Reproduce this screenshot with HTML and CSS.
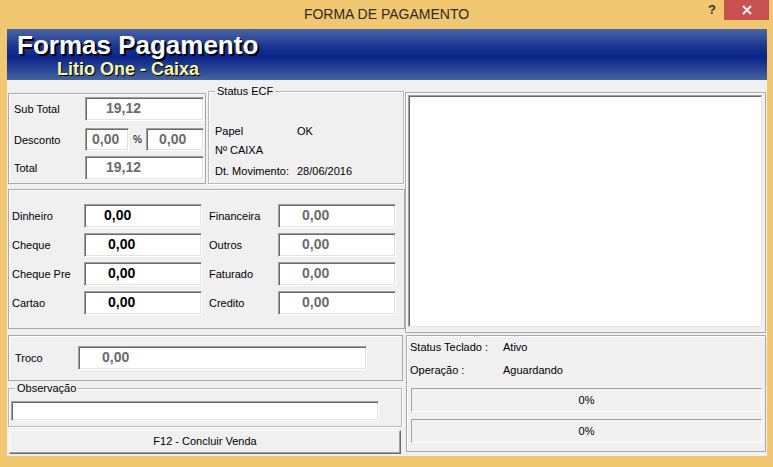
FILE: index.html
```html
<!DOCTYPE html>
<html lang="pt">
<head>
<meta charset="utf-8">
<title>Forma de Pagamento</title>
<link rel="stylesheet" href="styles.css">
</head>
<body>
<div class="window">
  <div class="titlebar">
    <div class="title">FORMA DE PAGAMENTO</div>
    <div class="help">?</div>
    <div class="close"><svg width="12" height="12" viewBox="0 0 12 12"><path d="M2 2 L10 10 M10 2 L2 10" stroke="#fff" stroke-width="1.8"/></svg></div>
  </div>
  <div class="client">
    <div class="header">
      <div class="h-title">Formas Pagamento</div>
      <div class="h-sub">Litio One - Caixa</div>
    </div>
    <div class="content">
      <div class="leftcol">
        <div class="toprow">
          <div class="panel totals">
            <div class="trow r1"><span class="lbl">Sub Total</span><div class="field w119 gray pl21">19,12</div></div>
            <div class="trow r2"><span class="lbl">Desconto</span><div class="field w44 gray pl7">0,00</div><span class="pct">%</span><div class="field w58 gray pl13">0,00</div></div>
            <div class="trow r3"><span class="lbl">Total</span><div class="field w119 gray pl21">19,12</div></div>
          </div>
          <div class="group ecf">
            <div class="legend">Status ECF</div>
            <div class="ecfrow e1"><span class="elbl">Papel</span><span>OK</span></div>
            <div class="ecfrow e2"><span class="elbl">Nº CAIXA</span><span></span></div>
            <div class="ecfrow e3"><span class="elbl">Dt. Movimento:</span><span>28/06/2016</span></div>
          </div>
        </div>
        <div class="panel payments">
          <div class="pcol">
            <div class="prow"><span class="plbl">Dinheiro</span><div class="field w118 black pl20">0,00</div></div>
            <div class="prow"><span class="plbl">Cheque</span><div class="field w118 black pl24">0,00</div></div>
            <div class="prow"><span class="plbl">Cheque Pre</span><div class="field w118 black pl24">0,00</div></div>
            <div class="prow"><span class="plbl">Cartao</span><div class="field w118 black pl24">0,00</div></div>
          </div>
          <div class="pcol pcol2">
            <div class="prow"><span class="plbl2">Financeira</span><div class="field w118 gray pl24">0,00</div></div>
            <div class="prow"><span class="plbl2">Outros</span><div class="field w118 gray pl24">0,00</div></div>
            <div class="prow"><span class="plbl2">Faturado</span><div class="field w118 gray pl24">0,00</div></div>
            <div class="prow"><span class="plbl2">Credito</span><div class="field w118 gray pl24">0,00</div></div>
          </div>
        </div>
        <div class="panel troco">
          <span class="tlbl">Troco</span><div class="field w289 gray pl24">0,00</div>
        </div>
        <div class="group obs">
          <div class="legend">Observação</div>
          <div class="field obsfield"></div>
        </div>
        <div class="button">F12 - Concluir Venda</div>
      </div>
      <div class="rightcol">
        <div class="memoframe"><div class="memo"></div></div>
        <div class="panel status">
          <div class="srow s1"><span class="slbl">Status Teclado :</span><span>Ativo</span></div>
          <div class="srow s2"><span class="slbl">Operação :</span><span>Aguardando</span></div>
          <div class="progress p1">0%</div>
          <div class="progress p2">0%</div>
        </div>
      </div>
    </div>
  </div>
</div>
</body>
</html>
```
FILE: styles.css
```css
* { box-sizing: border-box; }
html, body { margin: 0; padding: 0; }
body {
  width: 773px;
  height: 467px;
  overflow: hidden;
  font-family: "Liberation Sans", Arial, sans-serif;
  font-size: 11px;
  color: #000;
}
.window {
  width: 773px;
  height: 467px;
  background: #f1c76f;
  display: flex;
  flex-direction: column;
}
.titlebar {
  height: 29px;
  display: flex;
  align-items: flex-start;
  position: relative;
}
.title {
  position: absolute;
  left: 0;
  right: 0;
  top: 6px;
  text-align: center;
  font-family: "Liberation Sans", Arial, sans-serif;
  font-size: 14px;
  color: #2b2b2b;
}
.help {
  position: absolute;
  left: 708px;
  top: 2px;
  font-size: 13px;
  font-weight: bold;
  color: #333;
}
.close {
  position: absolute;
  left: 724px;
  top: 0;
  width: 45px;
  height: 20px;
  background: #c75050;
  display: flex;
  align-items: center;
  justify-content: center;
}
.client {
  margin: 0 6px 0 7px;
  height: 427px;
  background: #f0f0f0;
  display: flex;
  flex-direction: column;
}
.header {
  height: 51px;
  background: linear-gradient(#4a64a6 0%, #1a3592 35%, #0a2389 55%, #2a4795 80%, #4563a2 100%);
  padding-left: 10px;
}
.h-title {
  font-family: "Liberation Sans", Arial, sans-serif;
  font-weight: bold;
  font-size: 26px;
  color: #fff;
  line-height: 28px;
  padding-top: 2px;
  text-shadow: 2px 2px 0 #000;
}
.h-sub {
  font-family: "Liberation Sans", Arial, sans-serif;
  font-weight: bold;
  font-size: 18px;
  color: #fbf7a0;
  line-height: 18px;
  margin-left: 40px;
  margin-top: 1px;
  text-shadow: 1px 1px 0 #000;
}
.content {
  display: flex;
  flex: 1;
  padding-left: 1px;
}
.leftcol {
  width: 397px;
  display: flex;
  flex-direction: column;
}
.rightcol {
  width: 361px;
  display: flex;
  flex-direction: column;
}
.panel {
  border: 1px solid #a9a9a9;
  box-shadow: inset 1px 1px 0 #fff;
}
.group {
  border: 1px solid #b8b8b8;
  box-shadow: inset 1px 1px 0 #fff, 1px 1px 0 #fff;
  position: relative;
}
.legend {
  position: absolute;
  top: -7px;
  left: 6px;
  background: #f0f0f0;
  padding: 0 2px;
  line-height: 13px;
}
.toprow {
  display: flex;
  margin-top: 11px;
  height: 93px;
}
.totals {
  margin-top: 2px;
  width: 198px;
  height: 91px;
  padding: 3px 0 0 5px;
}
.trow {
  display: flex;
  align-items: center;
  height: 24px;
}
.r2 { margin-top: 7px; height: 23px; }
.r3 { margin-top: 5px; }
.lbl { width: 71px; }
.pct { width: 17px; text-align: center; font-size: 10px; }
.field {
  height: 24px;
  background: #fff;
  border: 1px solid #a0a0a0;
  border-right-color: #fff;
  border-bottom-color: #fff;
  box-shadow: inset 1px 1px 0 #696969, inset -1px -1px 0 #e3e3e3;
  font-weight: bold;
  font-size: 14px;
  line-height: 21px;
  white-space: nowrap;
}
.r2 .field { height: 23px; }
.gray { color: #6b6b6b; }
.black { color: #000; }
.w119 { width: 119px; }
.w118 { width: 118px; }
.w44 { width: 44px; }
.w58 { width: 58px; }
.w289 { width: 289px; }
.pl7 { padding-left: 6px; }
.pl13 { padding-left: 12px; }
.pl20 { padding-left: 19px; }
.pl21 { padding-left: 20px; }
.pl24 { padding-left: 23px; }
.ecf {
  margin-left: 2px;
  width: 196px;
  height: 93px;
  padding: 30px 0 0 6px;
}
.ecfrow {
  display: flex;
  height: 19px;
  line-height: 19px;
}
.e3 { margin-top: 2px; }
.elbl { width: 82px; }
.payments {
  margin-top: 5px;
  height: 140px;
  display: flex;
  padding: 14px 0 0 3px;
}
.pcol {
  display: flex;
  flex-direction: column;
  gap: 5px;
  width: 198px;
}
.pcol2 { width: 196px; }
.prow {
  display: flex;
  align-items: center;
  height: 24px;
}
.plbl { width: 72px; }
.plbl2 { width: 69px; }
.troco {
  margin-top: 6px;
  width: 395px;
  height: 46px;
  display: flex;
  align-items: center;
  padding-left: 6px;
}
.tlbl { width: 63px; }
.obs {
  margin-top: 7px;
  width: 394px;
  height: 39px;
  padding: 12px 0 0 2px;
}
.obsfield {
  width: 368px;
  height: 20px;
}
.button {
  margin: 3px 0 0 1px;
  width: 392px;
  height: 24px;
  border: 1px solid #fff;
  border-right-color: #696969;
  border-bottom-color: #696969;
  box-shadow: inset -1px -1px 0 #a0a0a0;
  background: #f0f0f0;
  text-align: center;
  line-height: 21px;
}
.memoframe {
  margin-top: 12px;
  height: 241px;
  border: 1px solid #a9a9a9;
  box-shadow: inset 1px 1px 0 #fff;
  padding: 2px 3px 0 2px;
}
.memo {
  height: 232px;
  background: #fff;
  border: 1px solid #a0a0a0;
  border-right-color: #e3e3e3;
  border-bottom-color: #e3e3e3;
  box-shadow: inset 1px 1px 0 #696969;
}
.status {
  margin: 2px 0 0 1px;
  height: 117px;
  padding: 4px 0 0 3px;
}
.srow {
  display: flex;
  height: 14px;
  line-height: 14px;
}
.s2 { margin-top: 9px; }
.slbl { width: 93px; }
.progress {
  margin-left: 1px;
  width: 351px;
  height: 24px;
  border: 1px solid #a0a0a0;
  border-right-color: #fff;
  border-bottom-color: #fff;
  background: #f0f0f0;
  text-align: center;
  line-height: 22px;
}
.p1 { margin-top: 11px; }
.p2 { margin-top: 7px; }
```
